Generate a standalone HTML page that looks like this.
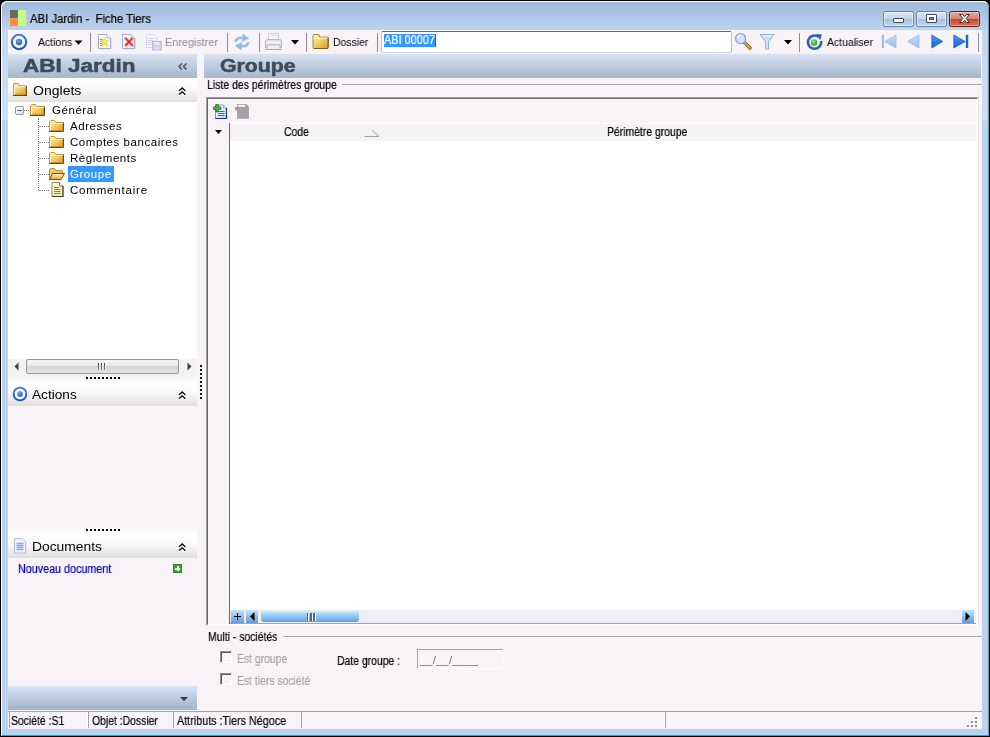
<!DOCTYPE html>
<html>
<head>
<meta charset="utf-8">
<title>ABI Jardin - Fiche Tiers</title>
<style>
html,body{margin:0;padding:0;}
body{width:990px;height:737px;overflow:hidden;background:#000;font-family:"Liberation Sans",sans-serif;font-size:11px;color:#000;position:relative;}
*{box-sizing:border-box;}
.abs{position:absolute;}
.t{position:absolute;white-space:nowrap;line-height:1;will-change:transform;}
/* window frame */
#win{left:0;top:0;width:990px;height:737px;background:#bbd1ee;border:1px solid #000;border-radius:7px 7px 0 0;overflow:hidden;}
#winhl{left:1px;top:1px;width:988px;height:735px;border-top:1px solid #fff;border-left:1px solid #fff;border-right:1px solid #5f9db2;border-bottom:1px solid #4f93a8;border-radius:6px 6px 0 0;}
#titlegrad{left:2px;top:2px;width:986px;height:28px;background:linear-gradient(#9fbadb 0,#a9c2e1 35%,#bdd3ec 100%);border-radius:5px 5px 0 0;}
#client{left:8px;top:30px;width:974px;height:699px;background:#f7f3f7;}
/* caption buttons */
.cb{position:absolute;top:11px;height:16px;border:1px solid #6483ad;border-radius:2.500px;background:linear-gradient(#d9e6f5 0,#c3d6ec 48%,#a5c0df 52%,#c0d5ec 100%);box-shadow:inset 0 0 0 1px rgba(255,255,255,.55);}
#bclose{border-color:#5a2118;background:linear-gradient(#e9a99b 0,#d9806c 48%,#c3462b 52%,#d7735c 100%);box-shadow:inset 0 0 0 1px rgba(255,255,255,.35);}
/* toolbar */
.sep{position:absolute;top:33px;width:1px;height:19px;background:#8f8b8f;}
.tb{font-size:11px;}
/* left panel */
.hdr{background:linear-gradient(#d8e4f3 0,#bfcde1 45%,#a8b6cb 100%);}
.sec{background:linear-gradient(#ffffff 0,#fbfbfb 40%,#e1dfe1 100%);}
.verd{font-family:"Liberation Sans",sans-serif;}
.dis{color:#8f8b8f;}

.big{font-weight:bold;font-size:18.5px;color:#3d4c59;transform-origin:0 0;transform:scaleX(1.215);-webkit-text-stroke:0.5px #3d4c59;}
.v13{font-size:13.5px;transform-origin:0 0;transform:scaleX(1.06);}
.v11{font-size:11.5px;letter-spacing:0.55px;}
.tb{transform-origin:0 0;transform:scaleX(0.95);}
#title{transform-origin:0 0;transform:scaleX(0.945);-webkit-text-stroke:0.200px #000;}

.gbtn{background:linear-gradient(#bfe9fd 0,#93c4f0 45%,#6c98d6 100%);}
.cbx{width:12px;height:12px;border-top:1px solid #8f8b8f;border-left:1px solid #8f8b8f;border-right:1px solid #fff;border-bottom:1px solid #fff;box-shadow:inset 1px 1px 0 #5f5b5f;}
.disx{color:#a5a1a5;text-shadow:1px 1px 0 #fff;}
.ssep{top:712px;width:2px;height:16px;border-left:1px solid #fff;border-right:1px solid #a5a1a5;}
.ms{font-size:12.5px;-webkit-text-stroke:0.2px currentColor;transform-origin:0 0;transform:scaleX(0.832);}
</style>
</head>
<body>
<div id="win" class="abs"></div>
<div id="titlegrad" class="abs"></div>
<div class="abs" style="left:2px;top:30px;width:6px;height:90px;background:linear-gradient(#c3d7ef,#cfdff4);"></div>
<div class="abs" style="left:982px;top:30px;width:6px;height:90px;background:linear-gradient(#c3d7ef,#cfdff4);"></div>
<div class="abs" style="left:987px;top:30px;width:1px;height:705px;background:#a6d7ec;"></div>
<div class="abs" style="left:2px;top:734px;width:986px;height:1px;background:#98e2fa;"></div>
<div class="abs" style="left:2px;top:733px;width:985px;height:1px;background:#b2d8f0;"></div>
<div id="winhl" class="abs"></div>
<div id="client" class="abs"></div>

<!-- title bar -->
<div class="abs" style="left:10px;top:10px;width:8px;height:8px;background:#6b6b63;"></div>
<div class="abs" style="left:10px;top:18px;width:8px;height:8px;background:#ff8c4a;"></div>
<div class="abs" style="left:18px;top:10px;width:8px;height:16px;background:#c6fb84;"></div>
<div id="title" class="t" style="left:30px;top:13px;font-size:12px;">ABI Jardin -&nbsp; Fiche Tiers</div>
<div id="bmin" class="cb" style="left:883px;width:31px;"></div>
<div id="bmax" class="cb" style="left:916px;width:31px;"></div>
<div id="bclose" class="cb" style="left:949px;width:31px;"></div>

<!-- TOOLBAR -->
<div class="abs" style="left:8px;top:53px;width:974px;height:1px;background:#eef3f9;"></div>
<svg class="abs" style="left:10px;top:33px;" width="18" height="18" viewBox="0 0 18 18"><defs><linearGradient id="gRing" x1="0" y1="0" x2="0" y2="1"><stop offset="0" stop-color="#4a7fd6"/><stop offset="1" stop-color="#2152ac"/></linearGradient><radialGradient id="gA" cx="40%" cy="35%" r="70%"><stop offset="0" stop-color="#6fa8ee"/><stop offset="1" stop-color="#1f5fc4"/></radialGradient></defs><circle cx="9" cy="9" r="7.2" fill="#f6f8ff" stroke="url(#gRing)" stroke-width="2.100"/><circle cx="9" cy="9" r="3.2" fill="url(#gA)"/></svg>
<div id="tActions" class="t tb" style="left:38px;top:37px;">Actions</div>
<svg class="abs" style="left:74px;top:40px;" width="9" height="5"><path d="M0.5 0.5h8l-4 4.2z" fill="#000"/></svg>
<div class="sep" style="left:90px;"></div>
<div class="sep" style="left:227px;"></div>
<div class="sep" style="left:259px;"></div>
<div class="sep" style="left:306px;"></div>
<div class="sep" style="left:377px;"></div>
<div class="sep" style="left:799px;"></div>
<div class="sep" style="left:978px;"></div>
<div id="tEnr" class="t tb dis" style="left:165px;top:37px;transform:scaleX(0.985);">Enregistrer</div>
<div id="tDossier" class="t tb" style="left:333px;top:37px;">Dossier</div>
<div id="tActu" class="t tb" style="left:827px;top:37px;">Actualiser</div>
<div id="inp" class="abs" style="left:381px;top:31px;width:351px;height:22px;background:#fff;border:1px solid #b4c0d2;border-top-color:#546c8e;border-bottom-color:#ccd6df;border-radius:2px;"></div>
<div id="sel" class="abs" style="left:384px;top:34px;width:51px;height:13px;background:#3399ff;"></div>
<div id="tSel" class="t ms" style="left:384px;top:34px;color:#fff;transform:scaleX(0.873);">ABI 00007</div><div class="abs" style="left:435px;top:34px;width:1px;height:13px;background:#7a4f22;"></div>

<svg width="0" height="0" style="position:absolute"><defs>
<linearGradient id="gF" x1="0" y1="0" x2="1" y2="1"><stop offset="0" stop-color="#fff0b4"/><stop offset="0.450" stop-color="#f8d068"/><stop offset="1" stop-color="#d8922c"/></linearGradient>
<linearGradient id="gF2" x1="0" y1="0" x2="0" y2="1"><stop offset="0" stop-color="#ffedaa"/><stop offset="1" stop-color="#e6a83c"/></linearGradient>
<symbol id="fold" viewBox="0 0 15 12"><path d="M0.5 11.500v-10l1-1h4l1.500 2h7.500v9z" fill="url(#gF)"/><path d="M0.500 11v-9.500l1-1h4l1.500 2h7" fill="none" stroke="#c49a3c" stroke-width="1"/><path d="M1.500 3.500h12.500M1.500 3.500v7.500" stroke="#fff6cf" stroke-width="1" fill="none" opacity=".9"/><path d="M14.500 2.500v9h-14.500" fill="none" stroke="#5f4c1e" stroke-width="1"/><path d="M13.500 3.500v7h-12" fill="none" stroke="#c08a2c" stroke-width="1" opacity=".7"/></symbol>
<symbol id="foldopen" viewBox="0 0 16 12"><path d="M0.500 11v-9.500l1-1h4l1.500 2h6.500v2.500" fill="#f0c860" stroke="#b8903c"/><path d="M0.500 11.500h11.500" stroke="#5f4c1e"/><path d="M3.500 5.500h12l-3.500 6h-11.500z" fill="url(#gF2)" stroke="#6a5420"/><path d="M4.200 6.500h9.800" stroke="#fff6cf" opacity=".8"/></symbol>
<symbol id="docic" viewBox="0 0 13 15"><defs><linearGradient id="gDoc" x1="0" y1="0" x2="1" y2="1"><stop offset="0" stop-color="#fffee0"/><stop offset="1" stop-color="#f6e98a"/></linearGradient></defs><path d="M1 0.500h7.500l3.500 3.500v10.500h-11z" fill="url(#gDoc)" stroke="#8a8a72" stroke-width="1"/><path d="M8.500 0.500v3.500h3.500" fill="#fffef0" stroke="#6a6a5a" stroke-width=".9"/><path d="M12 4v10.500h-11" fill="none" stroke="#3f3f38" stroke-width="1.100"/><path d="M3 5.500h5M3 7.500h6.500M3 9.500h6.500M3 11.500h6.500" stroke="#7d8068" stroke-width="1"/></symbol>
<symbol id="chev" viewBox="0 0 8 9"><path d="M1 4l3-3 3 3M1 8l3-3 3 3" fill="none" stroke="#000" stroke-width="1.3"/></symbol>
</defs></svg>
<!-- ICONS -->
<!-- caption glyphs -->
<div class="abs" style="left:893px;top:18px;width:11px;height:5px;background:#fff;border:1px solid #3d4a5e;border-radius:1px;"></div>
<div class="abs" style="left:926px;top:14px;width:11px;height:9px;background:#fff;border:1px solid #3d4a5e;border-radius:1px;"></div>
<div class="abs" style="left:929px;top:17px;width:5px;height:3px;background:#8095b0;border:1px solid #3d4a5e;"></div>
<svg class="abs" style="left:958px;top:13px;" width="13" height="11" viewBox="0 0 13 11"><path d="M1.5 1.5h3l2 2.2 2-2.2h3l-3.4 4 3.4 4h-3l-2-2.2-2 2.2h-3l3.4-4z" fill="#fff" stroke="#4a2a28" stroke-width="1"/></svg>
<!-- new doc star -->
<svg class="abs" style="left:97px;top:33px;" width="16" height="18" viewBox="0 0 16 18"><defs><linearGradient id="gPg" x1="0" y1="0" x2="1" y2="1"><stop offset="0" stop-color="#ffffff"/><stop offset="1" stop-color="#e6ecfa"/></linearGradient></defs><path d="M2.500 2.500v13.800h12v-10.300l-3.500-3.500z" fill="#a9b4cc" opacity=".75"/><path d="M1.500 1.500h8.500l3.500 3.500v10.500h-12z" fill="url(#gPg)" stroke="#a3b0cf"/><path d="M10 1.500v3.500h3.500" fill="#eef2fb" stroke="#a3b0cf" stroke-width=".8"/><path d="M3 6.500h2.500M3 8.500h2.500M3 10.500h2.500M3 12.500h2.500" stroke="#6f8fdc"/><path d="M7.80 4.80 L9.03 7.50 L11.98 7.84 L9.80 9.85 L10.39 12.76 L7.80 11.30 L5.21 12.76 L5.80 9.85 L3.62 7.84 L6.57 7.50z" fill="#f2ea4e" stroke="#e4d83a" stroke-width=".7"/></svg>
<!-- delete doc -->
<svg class="abs" style="left:121px;top:33px;" width="16" height="18" viewBox="0 0 16 18"><path d="M2.500 2.500v13.800h12v-10.300l-3.500-3.500z" fill="#a9b4cc" opacity=".75"/><path d="M1.500 1.500h8.500l3.500 3.500v10.500h-12z" fill="url(#gPg)" stroke="#a3b0cf"/><path d="M10 1.500v3.500h3.500" fill="#eef2fb" stroke="#a3b0cf" stroke-width=".8"/><path d="M4.800 5.500l6.400 6.800M11.200 5.500l-6.400 6.800" stroke="#f7a4a4" stroke-width="3.600" stroke-linecap="round" opacity=".85"/><path d="M4.800 5.500l6.400 6.800M11.200 5.500l-6.400 6.800" stroke="#d81c1c" stroke-width="1.300" stroke-linecap="round"/></svg>
<!-- save disabled -->
<svg class="abs" style="left:145px;top:33px;" width="18" height="18" viewBox="0 0 18 18"><path d="M1.500 1.500h7l3 3v10h-10z" fill="#f6f6fb" stroke="#d5d8e6"/><path d="M3 5.500h6M3 7.500h6M3 9.500h6M3 11.500h4" stroke="#d0d6ea"/><rect x="7.500" y="8.500" width="9" height="8.500" fill="#cfcbea" stroke="#bdb8e0"/><rect x="9.500" y="9" width="5" height="3" fill="#ecebf8"/><rect x="9.500" y="13.500" width="5" height="3" fill="#e0def2"/></svg>
<!-- refresh arrows (disabled) -->
<svg class="abs" style="left:233px;top:33px;" width="18" height="18" viewBox="0 0 18 18"><path d="M1.500 8.500c.5-3.500 4-5.500 8-4.500l.5-3 6 4.500-7 3 .5-2.500c-2.500-.5-4.500.5-5.500 2.500z" fill="#8fbbea" stroke="#a9cbf0" stroke-width=".6"/><path d="M16.500 9.500c-.5 3.500-4 5.500-8 4.500l-.5 3-6-4.500 7-3-.5 2.500c2.500.5 4.500-.5 5.500-2.500z" fill="#8fbbea" stroke="#a9cbf0" stroke-width=".6"/></svg>
<!-- printer -->
<svg class="abs" style="left:264px;top:32px;" width="20" height="19" viewBox="0 0 20 19"><path d="M4.500 1.500h10v7h-10z" fill="#f4f4f4" stroke="#d0d0d0"/><path d="M6 3.500h7" stroke="#dcdcdc"/><path d="M1.500 9c0-1 .8-1.500 1.800-1.500h12.400c1 0 1.800.5 1.800 1.500v6.500h-16z" fill="#dedede" stroke="#b9b9b9"/><path d="M2 10.500h15" stroke="#fafafa" stroke-width="1.500"/><path d="M3 13h13v4.500h-13z" fill="#efefef" stroke="#bdbdbd"/><path d="M1.500 17.500h16" stroke="#a9a9a9"/></svg>
<svg class="abs" style="left:291px;top:40px;" width="8" height="5"><path d="M0 0h8l-4 4.500z" fill="#000"/></svg>
<!-- dossier folder -->
<svg class="abs" style="left:312px;top:34px;" width="17" height="15" viewBox="0 0 17 15"><path d="M1 1.500c0-.5.300-1 1-1h4.500c.700 0 1 .5 1 1v1.500h8c.500 0 1 .4 1 1v9.500c0 .6-.5 1-1 1h-13.500c-.6 0-1-.4-1-1z" fill="url(#gF)" stroke="#b08a3a" stroke-width="1"/><path d="M1.500 4.200h14" stroke="#fff5c8" stroke-width="1"/><path d="M16 4v9.500c0 .5-.4 1-1 1h-13" fill="none" stroke="#6f5a2c" stroke-width="1"/></svg>
<!-- magnifier -->
<svg class="abs" style="left:734px;top:32px;" width="18" height="18" viewBox="0 0 18 18"><path d="M10.500 10.500l5.500 5.500" stroke="#7a5220" stroke-width="3.400" stroke-linecap="round"/><path d="M10.500 10.500l5.500 5.500" stroke="#e0a050" stroke-width="1.800" stroke-linecap="round"/><circle cx="6.600" cy="6.600" r="5" fill="#d4e4fa" stroke="#86a4dc" stroke-width="1.300"/><path d="M3.500 5.500c.5-1.500 2-2.500 3.500-2.500" stroke="#fff" stroke-width="1.200" fill="none"/></svg>
<!-- funnel -->
<svg class="abs" style="left:759px;top:33px;" width="16" height="17" viewBox="0 0 16 17"><path d="M1 1.500h14l-5.500 7v7.500h-3v-7.500z" fill="#d3e2f7" stroke="#8eaee0" stroke-width="1"/><path d="M3 2.600h10" stroke="#f0f5fd"/></svg>
<svg class="abs" style="left:784px;top:40px;" width="8" height="5"><path d="M0 0h8l-4 4.500z" fill="#000"/></svg>
<!-- actualiser icon -->
<svg class="abs" style="left:805px;top:33px;" width="18" height="18" viewBox="0 0 18 18"><defs><radialGradient id="gG" cx="40%" cy="35%" r="70%"><stop offset="0" stop-color="#8fe87a"/><stop offset="1" stop-color="#1f9a2a"/></radialGradient></defs><path d="M13.500 3.800a6.600 6.600 0 1 0 2.600 4.200" fill="none" stroke="#2b5fb8" stroke-width="2.600"/><path d="M11 1l6 .5-2 5.500z" fill="#2b5fb8"/><circle cx="9" cy="9.500" r="3.200" fill="url(#gG)"/></svg>
<!-- nav -->
<svg class="abs" style="left:881px;top:34px;" width="16" height="15" viewBox="0 0 16 15"><defs><linearGradient id="gN1" x1="0" y1="0" x2="0" y2="1"><stop offset="0" stop-color="#c4dbf6"/><stop offset="1" stop-color="#98bdea"/></linearGradient><linearGradient id="gN2" x1="0" y1="0" x2="0" y2="1"><stop offset="0" stop-color="#4f9af4"/><stop offset="1" stop-color="#1a5cc8"/></linearGradient></defs><rect x="0.800" y="0.800" width="2.200" height="13.200" fill="#9cbde8"/><path d="M15 1v13l-11.500-6.500z" fill="url(#gN1)" stroke="#9cbde8" stroke-width=".8"/></svg>
<svg class="abs" style="left:907px;top:34px;" width="13" height="15" viewBox="0 0 13 15"><path d="M12 1v13l-11.500-6.500z" fill="url(#gN1)" stroke="#9cbde8" stroke-width=".8"/></svg>
<svg class="abs" style="left:931px;top:34px;" width="13" height="15" viewBox="0 0 13 15"><path d="M.8 1v13l11-6.500z" fill="url(#gN2)" stroke="#1f62cc" stroke-width=".8"/></svg>
<svg class="abs" style="left:953px;top:34px;" width="16" height="15" viewBox="0 0 16 15"><path d="M.8 1v13l11.500-6.500z" fill="url(#gN2)" stroke="#1f62cc" stroke-width=".8"/><rect x="12.800" y=".8" width="2.400" height="13.200" fill="#1f62cc"/></svg>
<!-- LEFTPANEL -->
<div id="lp" class="abs" style="left:8px;top:54px;width:189px;height:656px;background:#f7f3f7;"></div>
<div id="lphdr" class="abs hdr" style="left:8px;top:54px;width:189px;height:24px;"></div>
<div id="tABI" class="t big" style="left:23px;top:57px;">ABI Jardin</div>
<svg class="abs" style="left:178px;top:63px;" width="10" height="7" viewBox="0 0 10 7"><path d="M4 0.500l-3 3 3 3M8.500 0.500l-3 3 3 3" fill="none" stroke="#3d4c59" stroke-width="1.400"/></svg>
<div id="secO" class="abs sec" style="left:8px;top:78px;width:189px;height:24px;"></div>
<svg class="abs" style="left:13px;top:83px;" width="14" height="13" viewBox="0 0 15 12" preserveAspectRatio="none"><use href="#fold"/></svg>
<div id="tOng" class="t v13" style="left:32.5px;top:83.5px;transform:scaleX(1.04);">Onglets</div>
<svg class="abs" style="left:178.300px;top:87px;" width="8.400" height="8.600" viewBox="0 0 8 9" preserveAspectRatio="none"><use href="#chev"/></svg>
<div id="tree" class="abs" style="left:8px;top:102px;width:189px;height:257px;background:#fff;"></div>
<!-- tree lines -->
<div class="abs" style="left:24px;top:110px;width:7px;height:0;border-top:1px dotted #808080;"></div>
<div class="abs" style="left:38px;top:118px;width:0;height:72px;border-left:1px dotted #808080;"></div>
<div class="abs" style="left:39px;top:126px;width:10px;height:0;border-top:1px dotted #808080;"></div>
<div class="abs" style="left:39px;top:142px;width:10px;height:0;border-top:1px dotted #808080;"></div>
<div class="abs" style="left:39px;top:158px;width:10px;height:0;border-top:1px dotted #808080;"></div>
<div class="abs" style="left:39px;top:174px;width:10px;height:0;border-top:1px dotted #808080;"></div>
<div class="abs" style="left:39px;top:190px;width:10px;height:0;border-top:1px dotted #808080;"></div>
<div class="abs" style="left:15px;top:106px;width:9px;height:9px;border:1px solid #9a9a9a;border-radius:2px;background:linear-gradient(135deg,#fff 30%,#dcdad6);"></div>
<div class="abs" style="left:17px;top:110px;width:5px;height:1px;background:#4058b0;"></div>
<svg class="abs" style="left:30px;top:104px;" width="15" height="12"><use href="#fold"/></svg>
<svg class="abs" style="left:49px;top:120px;" width="15" height="12"><use href="#fold"/></svg>
<svg class="abs" style="left:49px;top:136px;" width="15" height="12"><use href="#fold"/></svg>
<svg class="abs" style="left:49px;top:152px;" width="15" height="12"><use href="#fold"/></svg>
<svg class="abs" style="left:49px;top:168px;" width="16" height="12"><use href="#foldopen"/></svg>
<svg class="abs" style="left:51px;top:182px;" width="13" height="15"><use href="#docic"/></svg>
<div id="selG" class="abs" style="left:68px;top:166px;width:46px;height:16px;background:#3399ff;"></div>
<div id="tGen" class="t v11" style="left:52px;top:105px;">Général</div>
<div id="tAdr" class="t v11" style="left:70px;top:121px;">Adresses</div>
<div id="tCpt" class="t v11" style="left:70px;top:137px;">Comptes bancaires</div>
<div id="tReg" class="t v11" style="left:70px;top:153px;">Règlements</div>
<div id="tGrp" class="t v11" style="left:70px;top:169px;color:#fff;">Groupe</div>
<div id="tCom" class="t v11" style="left:70px;top:185px;letter-spacing:0.800px;">Commentaire</div>
<!-- h scrollbar -->
<div class="abs" style="left:8px;top:359px;width:189px;height:16px;background:#f3f1f3;"></div>
<div id="thumb" class="abs" style="left:26px;top:359px;width:153px;height:15px;border:1px solid #979797;border-radius:2px;background:linear-gradient(#f4f4f4 0,#e9e9eb 45%,#d6d6da 50%,#e3e3e6 100%);"></div>
<div class="abs" style="left:98px;top:363px;width:8px;height:7px;background:linear-gradient(90deg,#3c3c46 0,#3c3c46 1.400px,#f4f4f6 1.400px,#f4f4f6 2.400px,transparent 2.400px,transparent 3px,#3c3c46 3px,#3c3c46 4.400px,#f4f4f6 4.400px,#f4f4f6 5.400px,transparent 5.400px,transparent 6px,#3c3c46 6px,#3c3c46 7.400px,#f4f4f6 7.400px);-webkit-mask-image:linear-gradient(#000,rgba(0,0,0,.55));"></div>
<svg class="abs" style="left:14px;top:362px;" width="5" height="9"><path d="M4.5 0.5v8l-4-4z" fill="#3c404c"/></svg>
<svg class="abs" style="left:187px;top:362px;" width="5" height="9"><path d="M0.5 0.5v8l4-4z" fill="#3c404c"/></svg>
<!-- splitters -->
<div class="abs" style="left:8px;top:375px;width:189px;height:7px;background:linear-gradient(#f3f1f3,#fdfdfd);"></div>
<div class="abs" style="left:8px;top:525px;width:189px;height:9px;background:linear-gradient(#f7f3f7,#fefefe);"></div>
<div class="abs" style="left:86px;top:377px;width:34px;height:2px;background:repeating-linear-gradient(90deg,#000 0,#000 2px,transparent 2px,transparent 4px);"></div>
<div class="abs" style="left:86px;top:529px;width:34px;height:2px;background:repeating-linear-gradient(90deg,#000 0,#000 2px,transparent 2px,transparent 4px);"></div>
<div class="abs" style="left:200px;top:365px;width:2px;height:34px;opacity:.9;background:repeating-linear-gradient(180deg,#000 0,#000 2px,transparent 2px,transparent 4px);"></div>
<!-- Actions section -->
<div id="secA" class="abs sec" style="left:8px;top:382px;width:189px;height:24px;"></div>
<svg class="abs" style="left:12px;top:386px;" width="16" height="16" viewBox="0 0 18 18"><circle cx="9" cy="9" r="7.2" fill="#f6f8ff" stroke="url(#gRing)" stroke-width="2.100"/><circle cx="9" cy="9" r="3.2" fill="url(#gA)"/></svg>
<div id="tAct2" class="t v13" style="left:32px;top:387.5px;transform:scaleX(1.01);">Actions</div>
<svg class="abs" style="left:178.300px;top:391px;" width="8.400" height="8.600" viewBox="0 0 8 9" preserveAspectRatio="none"><use href="#chev"/></svg>
<!-- Documents section -->
<div id="secD" class="abs sec" style="left:8px;top:534px;width:189px;height:24px;"></div>
<svg class="abs" style="left:13px;top:538px;" width="14" height="16" viewBox="0 0 14 16"><path d="M2.500 1.500h8l3 3v11h-11z" fill="#c9cfe0" opacity=".55"/><path d="M1.500 0.500h8l3 3v11.500h-11z" fill="#edf2fe" stroke="#b4c0dc"/><path d="M3.500 5.500h7M3.500 7.500h7M3.500 9.500h7M3.500 11.500h7" stroke="#8fabea" stroke-width="1.400"/></svg>
<div id="tDoc" class="t v13" style="left:31.5px;top:539.5px;transform:scaleX(1.025);">Documents</div>
<svg class="abs" style="left:178.300px;top:543px;" width="8.400" height="8.600" viewBox="0 0 8 9" preserveAspectRatio="none"><use href="#chev"/></svg>
<div id="tNouv" class="t ms" style="left:18px;top:563px;color:#0000a8;transform:scaleX(0.86);">Nouveau document</div>
<div class="abs" style="left:173px;top:564px;width:9px;height:9px;background:#3aa53a;border:1px solid #2c8a2c;"></div>
<div class="abs" style="left:175px;top:567.500px;width:5px;height:2px;background:#fff;"></div>
<div class="abs" style="left:176.500px;top:566px;width:2px;height:5px;background:#fff;"></div>
<!-- bottom band -->
<div id="lpbot" class="abs" style="left:8px;top:686px;width:189px;height:24px;background:linear-gradient(#dbe6f4 0,#bccde2 45%,#a3b4c9 100%);"></div>
<svg class="abs" style="left:179.500px;top:697px;" width="8" height="5"><path d="M0 0h8l-4 4.200z" fill="#35424f"/></svg>
<!-- MAIN -->
<div id="mhdr" class="abs hdr" style="left:204px;top:54px;width:777px;height:24px;"></div>
<div id="tGroupe" class="t big" style="left:220px;top:57px;transform:scaleX(1.15);">Groupe</div>
<div id="tListe" class="t ms" style="left:207px;top:79px;transform:scaleX(0.838);">Liste des périmètres groupe</div>
<div class="abs" style="left:342px;top:84px;width:640px;height:2px;border-top:1px solid #a5a1a5;border-bottom:1px solid #fff;"></div>
<!-- grid -->
<div id="grid" class="abs" style="left:206px;top:97px;width:773px;height:529px;background:#fff;border-top:1px solid #a0a0a0;border-left:1px solid #a0a0a0;border-right:1px solid #e6e2e4;border-bottom:1px solid #fff;"></div>
<div id="gridin" class="abs" style="left:207px;top:98px;width:771px;height:527px;border-top:1px solid #696969;border-left:1px solid #696969;border-right:1px solid #fff;border-bottom:1px solid #fff;"></div>
<div id="gtb" class="abs" style="left:208px;top:99px;width:768px;height:24px;background:#f7f3f7;border-top:1px solid #fdfcfd;"></div>
<div id="gind" class="abs" style="left:208px;top:123px;width:22px;height:501px;background:#f7f3f7;border-right:1px solid #696969;"></div>
<div id="ghead" class="abs" style="left:230px;top:123px;width:746px;height:18px;background:#f5f2f5;border-top:1px solid #fdfcfd;"></div>
<svg class="abs" style="left:215px;top:130px;" width="7" height="4"><path d="M0 0h7l-3.5 4z" fill="#000"/></svg>
<div id="tCode" class="t ms" style="left:284px;top:126px;">Code</div>
<svg class="abs" style="left:364px;top:129px;" width="16" height="9" viewBox="0 0 16 9"><path d="M1 7.500l7-6.500" stroke="#fff" stroke-width="1" fill="none"/><path d="M8 1l7 6.500h-14.500" stroke="#a5a1a5" stroke-width="1" fill="none"/></svg>
<div id="tPeri" class="t ms" style="left:607px;top:126px;">Périmètre groupe</div>
<!-- grid toolbar icons -->
<svg class="abs" style="left:213px;top:104px;" width="15" height="16" viewBox="0 0 15 16"><defs><linearGradient id="gD" x1="0" y1="0" x2="1" y2="1"><stop offset="0" stop-color="#ffffff"/><stop offset="1" stop-color="#c4d8f8"/></linearGradient></defs><path d="M2.500 1h8l3 3v10.500h-11z" fill="url(#gD)" stroke="#7f98d0" stroke-width="1"/><path d="M10.500 1v3h3" fill="#e4edfc" stroke="#7f98d0" stroke-width=".8"/><path d="M13.500 4v10.500h-11" fill="none" stroke="#22387c" stroke-width="1.200"/><path d="M5 7.500h6.500M5 9.500h6.500M5 11.500h6.500" stroke="#3f66c8" stroke-width="1.100"/><path d="M2.800 0.500h2.600v2.400h2.400v2.600h-2.400v2.400h-2.600v-2.400h-2.400v-2.600h2.400z" fill="#45b045" stroke="#237a23" stroke-width=".8"/></svg>
<svg class="abs" style="left:235px;top:104px;" width="16" height="16" viewBox="0 0 16 16"><g transform="translate(1,1)" fill="#fdfcfd"><path d="M2 0h9.500l2.500 2.500v12.300h-12z"/><rect x="0" y="3" width="2.500" height="3.500"/></g><path d="M2 0h9.500l2.500 2.500v12.300h-12z" fill="#a5a1a5"/><rect x="0" y="3" width="2.500" height="3.500" fill="#a5a1a5"/><rect x="3.100" y="0.900" width="6.900" height="1.900" fill="#fbf9fb"/></svg>
<!-- grid h scrollbar -->
<div id="gsb" class="abs" style="left:230px;top:610px;width:746px;height:14px;background:#eceefa;border-bottom:1px solid #a5a1a5;"></div>
<div class="abs gbtn" style="left:231px;top:610px;width:13px;height:13px;"></div>
<div class="abs gbtn" style="left:246px;top:610px;width:12px;height:13px;"></div>
<div class="abs gbtn" style="left:962px;top:610px;width:12px;height:13px;"></div>
<div class="abs" style="left:234px;top:616px;width:7px;height:1px;background:#000;"></div>
<div class="abs" style="left:237px;top:613px;width:1px;height:7px;background:#000;"></div>
<svg class="abs" style="left:250px;top:612px;" width="5" height="9"><path d="M4.500 0v9l-4.500-4.500z" fill="#000"/></svg>
<svg class="abs" style="left:965px;top:612px;" width="5" height="9"><path d="M0.500 0v9l4.500-4.500z" fill="#000"/></svg>
<div id="gthumb" class="abs" style="left:261px;top:610px;width:98px;height:12px;border-radius:1px 1px 3px 3px;background:linear-gradient(#e2f7ff 0,#a4dafc 30%,#86bdf0 65%,#6a9ada 100%);"></div>
<div class="abs" style="left:307px;top:613px;width:9px;height:8px;background:linear-gradient(90deg,#55657c 0,#55657c 1.300px,#fff 1.300px,#fff 2.400px,transparent 2.400px,transparent 3.300px,#55657c 3.300px,#55657c 4.600px,#fff 4.600px,#fff 5.700px,transparent 5.700px,transparent 6.500px,#55657c 6.500px,#55657c 7.800px,#fff 7.800px);"></div>
<!-- multi societes -->
<div id="tMulti" class="t ms" style="left:208px;top:631px;">Multi - sociétés</div>
<div class="abs" style="left:283px;top:636px;width:699px;height:2px;border-top:1px solid #a5a1a5;border-bottom:1px solid #fff;"></div>
<div class="abs cbx" style="left:220px;top:651px;"></div>
<div class="abs cbx" style="left:220px;top:673px;"></div>
<div id="tEstG" class="t ms disx" style="left:237px;top:653px;">Est groupe</div>
<div id="tEstT" class="t ms disx" style="left:237px;top:675px;">Est tiers société</div>
<div id="tDate" class="t ms" style="left:337px;top:655px;">Date groupe :</div>
<div id="datef" class="abs" style="left:417px;top:649px;width:86px;height:20px;border-top:1px solid #a5a1a5;border-left:1px solid #a5a1a5;border-right:1px solid #fff;border-bottom:1px solid #fff;"></div>
<div id="tMask" class="t" style="left:420px;top:655px;color:#6d696d;letter-spacing:0.300px;">__/__/____</div>
<!-- STATUS -->
<div id="status" class="abs" style="left:8px;top:711px;width:974px;height:18px;background:#f7f3f7;border-top:1px solid #a5a1a5;"></div>
<div class="abs ssep" style="left:87px;"></div>
<div class="abs ssep" style="left:172px;"></div>
<div class="abs ssep" style="left:300px;"></div>
<div class="abs ssep" style="left:664px;"></div>
<div class="abs" style="left:9px;top:711px;width:1px;height:17px;background:#a5a1a5;"></div>
<div id="tSoc" class="t ms" style="left:11px;top:715px;">Société :S1</div>
<div id="tObj" class="t ms" style="left:92px;top:715px;">Objet :Dossier</div>
<div id="tAttr" class="t ms" style="left:177px;top:715px;transform:scaleX(0.862);">Attributs :Tiers Négoce</div>
<svg class="abs" style="left:967px;top:717px;" width="12" height="12"><g fill="#fff" transform="translate(1,1)"><rect x="8" y="0" width="2" height="2"/><rect x="4" y="4" width="2" height="2"/><rect x="8" y="4" width="2" height="2"/><rect x="0" y="8" width="2" height="2"/><rect x="4" y="8" width="2" height="2"/><rect x="8" y="8" width="2" height="2"/></g><g fill="#8e8a8e"><rect x="8" y="0" width="2" height="2"/><rect x="4" y="4" width="2" height="2"/><rect x="8" y="4" width="2" height="2"/><rect x="0" y="8" width="2" height="2"/><rect x="4" y="8" width="2" height="2"/><rect x="8" y="8" width="2" height="2"/></g></svg>
</body>
</html>
